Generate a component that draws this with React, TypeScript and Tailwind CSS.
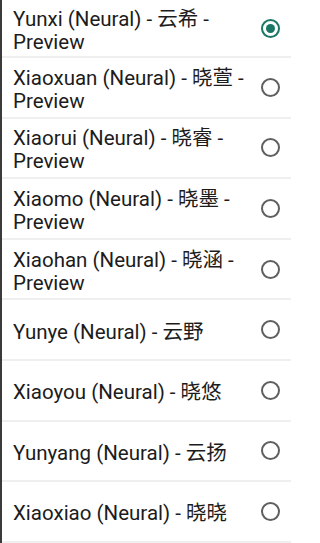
const voices = [
  { label: "Yunxi (Neural) - 云希 - Preview", selected: true },
  { label: "Xiaoxuan (Neural) - 晓萱 - Preview" },
  { label: "Xiaorui (Neural) - 晓睿 - Preview" },
  { label: "Xiaomo (Neural) - 晓墨 - Preview" },
  { label: "Xiaohan (Neural) - 晓涵 - Preview" },
  { label: "Yunye (Neural) - 云野" },
  { label: "Xiaoyou (Neural) - 晓悠" },
  { label: "Yunyang (Neural) - 云扬" },
  { label: "Xiaoxiao (Neural) - 晓晓" },
];

function Radio({ checked }: { checked?: boolean }) {
  return (
    <span
      className={
        checked
          ? "flex h-[19px] w-[19px] shrink-0 items-center justify-center rounded-full border-2 border-[#1a7766]"
          : "flex h-[19px] w-[19px] shrink-0 items-center justify-center rounded-full border-2 border-[#5f5f5f]"
      }
    >
      {checked && <span className="h-[9px] w-[9px] rounded-full bg-[#1a7766]" />}
    </span>
  );
}

export default function App() {
  return (
    <div
      className="h-[543px] w-[291px] overflow-hidden border-l-2 border-[#3a3a3a] bg-white text-[#1c1c1c]"
      style={{ fontFamily: 'Roboto, "Noto Sans CJK SC", sans-serif' }}
    >
      {voices.map((voice, index) => (
        <div
          key={voice.label}
          className={
            index === 0
              ? "flex h-[58px] items-center justify-between border-b-2 border-[#efefef] pl-[11px] pr-[11px]"
              : "flex h-[60.6px] items-center justify-between border-b-2 border-[#efefef] pl-[11px] pr-[11px]"
          }
        >
          <span className="w-[240px] pt-[5px] text-[20.5px] leading-[23px]">{voice.label}</span>
          <Radio checked={voice.selected} />
        </div>
      ))}
    </div>
  );
}
